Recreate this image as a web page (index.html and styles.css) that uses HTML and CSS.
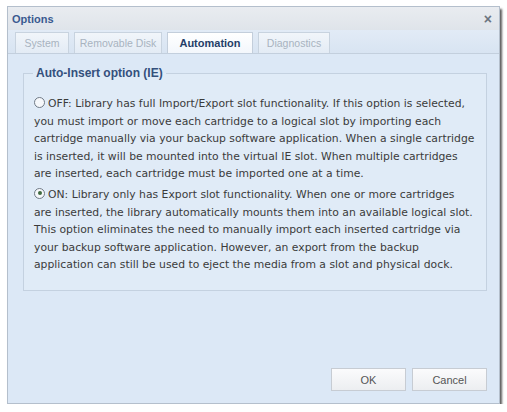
FILE: index.html
```html
<!DOCTYPE html>
<html>
<head>
<meta charset="utf-8">
<link rel="stylesheet" href="styles.css">
</head>
<body>
<div class="window">
  <div class="titlebar">
    <span class="title">Options</span>
    <span class="close">×</span>
  </div>
  <div class="tabstrip">
    <div class="tab t-system">System</div>
    <div class="tab t-disk">Removable Disk</div>
    <div class="tab t-auto active">Automation</div>
    <div class="tab t-diag">Diagnostics</div>
  </div>
  <div class="content">
    <div class="group">
      <div class="legend">Auto-Insert option (IE)</div>
      <p class="opt off"><span class="radio"></span>OFF: Library has full Import/Export slot functionality. If this option is selected,<br>you must import or move each cartridge to a logical slot by importing each<br>cartridge manually via your backup software application. When a single cartridge<br>is inserted, it will be mounted into the virtual IE slot. When multiple cartridges<br>are inserted, each cartridge must be imported one at a time.</p>
      <p class="opt on"><span class="radio checked"></span>ON: Library only has Export slot functionality. When one or more cartridges<br>are inserted, the library automatically mounts them into an available logical slot.<br>This option eliminates the need to manually import each inserted cartridge via<br>your backup software application. However, an export from the backup<br>application can still be used to eject the media from a slot and physical dock.</p>
    </div>
    <div class="buttons">
      <div class="btn ok">OK</div>
      <div class="btn cancel">Cancel</div>
    </div>
  </div>
</div>
</body>
</html>
```

FILE: styles.css
```css
html, body {
  margin: 0;
  padding: 0;
  background: #ffffff;
}
body {
  font-family: "Liberation Sans", Arial, sans-serif;
  font-size: 11px;
  color: #3a3a3a;
}
.window {
  margin: 6px 0 0 7px;
  width: 493px;
  height: 398px;
  box-sizing: border-box;
  border: 1px solid #b4bfcc;
  background: #dce8f6;
  box-shadow: 2px 3px 2px rgba(40, 40, 40, 0.75);
  display: flex;
  flex-direction: column;
}
.titlebar {
  height: 23px;
  flex: none;
  background: linear-gradient(#e9ecf0, #dfe4ea);
  display: flex;
  align-items: center;
  justify-content: space-between;
  padding: 0 7px 0 4px;
}
.title {
  font-weight: bold;
  color: #3a5a90;
  font-size: 11px;
}
.close {
  color: #6b7480;
  font-size: 14px;
  font-weight: bold;
  line-height: 1;
}
.tabstrip {
  height: 24px;
  flex: none;
  box-sizing: border-box;
  background: linear-gradient(#e2ebf6, #d8e4f2);
  border-bottom: 1px solid #c3cfdd;
  display: flex;
  align-items: flex-end;
  padding: 0 0 0 7px;
}
.tab {
  height: 21px;
  box-sizing: border-box;
  border: 1px solid #c8d3df;
  border-bottom: none;
  background: linear-gradient(#f1f5fa, #e3ebf5);
  color: #a8b3c0;
  font-size: 10.5px;
  display: flex;
  align-items: center;
  justify-content: center;
  margin-right: 5px;
}
.t-system { width: 54px; }
.t-disk { width: 88px; }
.t-auto { width: 86px; margin-right: 5px; }
.t-diag { width: 72px; }
.tab.active {
  background: linear-gradient(#ffffff, #f3f7fc);
  color: #253e68;
  font-weight: bold;
  font-size: 11px;
  border-color: #c3cedb;
}
.content {
  flex: 1;
  display: flex;
  flex-direction: column;
  padding: 19px 12px 12px 15px;
}
.group {
  position: relative;
  height: 218px;
  box-sizing: border-box;
  border: 1px solid #c4d1e0;
  background: #e0ebf7;
  padding: 21px 4px 0 10px;
}
.legend {
  position: absolute;
  top: -8px;
  left: 9px;
  padding: 0 3px;
  background: linear-gradient(#dce8f6 50%, #e0ebf7 50%);
  font-weight: bold;
  font-size: 12px;
  color: #34507c;
  line-height: 15px;
}
.opt {
  font-family: "DejaVu Sans", Verdana, sans-serif;
  font-size: 10.8px;
  margin: 0 0 3px 0;
  line-height: 17.6px;
  white-space: nowrap;
  color: #3b3b3b;
}
.radio {
  display: inline-block;
  width: 9px;
  height: 9px;
  border: 1px solid #707a86;
  border-radius: 50%;
  background: #f6f8fb;
  vertical-align: -1px;
  margin-right: 3px;
  position: relative;
}
.radio.checked::after {
  content: "";
  position: absolute;
  left: 2.5px;
  top: 2.5px;
  width: 4px;
  height: 4px;
  border-radius: 50%;
  background: #3f6a3f;
}
.buttons {
  margin-top: auto;
  display: flex;
  justify-content: flex-end;
  gap: 6px;
  padding-right: 0;
}
.btn {
  width: 75px;
  height: 23px;
  box-sizing: border-box;
  border: 1px solid #c7ccd3;
  background: linear-gradient(#fbfbfc, #eceef1);
  color: #555;
  display: flex;
  align-items: center;
  justify-content: center;
}
```
